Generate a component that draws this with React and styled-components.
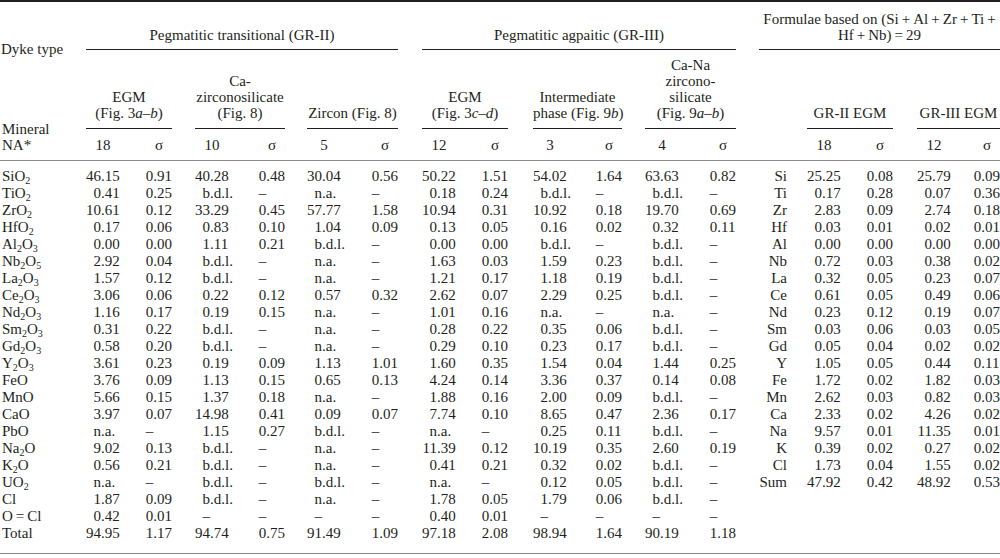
import React from 'react';
import styled, { createGlobalStyle } from 'styled-components';

// Column template shared by the head and every body row
const COLS =
    '86px 43px 43px 23px 45px 45px 22px 45px 46px 24px 43px 43px 25px 44px 45px 23px 45px 46px 23px 28px 20px 43px 43px 24px 41px 42px';

const INK = '#231f20';
const GREY = '#8a8a8a';

const GlobalStyle = createGlobalStyle`
    body {
        margin: 0;
        background: #ffffff;
        color: ${INK};
        font-family: "Liberation Serif", "Times New Roman", serif;
    }
`;

const Table = styled.div`
    width: 1000px;
    font-size: 15px;
    border-top: 2px solid ${INK};
    border-bottom: 1px solid ${GREY};
`;

const Head = styled.div`
    display: grid;
    grid-template-columns: ${COLS};
    grid-template-rows: 48px 79px 31px;
    border-bottom: 1px solid ${GREY};
`;

const DykeType = styled.div`
    grid-column: 1;
    grid-row: 1 / 3;
    align-self: start;
    padding: 39px 0 0 1px;
    line-height: 17px;
`;

const GroupTitle = styled.div`
    grid-column: ${p => p.$span};
    grid-row: 1;
    align-self: end;
    text-align: center;
    line-height: 16px;
    padding-bottom: 6px;
    border-bottom: 1px solid ${INK};
`;

const SubTitle = styled.div`
    grid-column: ${p => p.$span};
    grid-row: 2;
    align-self: end;
    text-align: center;
    line-height: 16px;
    padding-bottom: 7px;
    border-bottom: 1px solid ${INK};
    white-space: nowrap;
`;

const MineralLabel = styled.div`
    grid-column: 1;
    grid-row: 2 / 4;
    align-self: end;
    line-height: 16px;
    padding: 0 0 7px 2px;
`;

const Count = styled.div`
    grid-column: ${p => p.$col};
    grid-row: 3;
    align-self: end;
    justify-self: ${p => (p.$sigma ? 'end' : 'start')};
    width: ${p => (p.$sigma ? '26px' : '34px')};
    text-align: center;
    line-height: 16px;
    padding-bottom: 7px;
`;

const Body = styled.div`
    padding: 7px 0 11px;
`;

const Row = styled.div`
    display: grid;
    grid-template-columns: ${COLS};
    height: 17px;
    line-height: 17px;
`;

const Label = styled.div`
    grid-column: 1;
    padding-left: 2px;
    white-space: nowrap;
`;

const Elem = styled.div`
    grid-column: 20;
    text-align: right;
`;

const NumCell = styled.div`
    grid-column: ${p => p.$col};
    display: flex;
    justify-content: ${p => (p.$sigma ? 'flex-end' : 'flex-start')};
    white-space: nowrap;
`;

const Int = styled.span`
    display: inline-block;
    text-align: right;
    min-width: ${p => (p.$sigma ? '0' : '1em')};
`;

const Frac = styled.span`
    display: inline-block;
    text-align: left;
    width: ${p => (p.$sigma ? '1.25em' : 'auto')};
`;

const Sub = styled.sub`
    font-size: 10px;
    line-height: 0;
    vertical-align: -3px;
`;

const T = '\u2009';

const Num = ({ col, sigma, value }) => {
    const i = value.indexOf('.');
    const int = i === -1 ? value : value.slice(0, i);
    const frac = i === -1 ? '' : value.slice(i);
    return (
        <NumCell $col={col} $sigma={sigma}>
            <Int $sigma={sigma}>{int}</Int>
            <Frac $sigma={sigma}>{frac}</Frac>
        </NumCell>
    );
};

const f = (a, b) => (
    <>
        {a}
        <Sub>{b}</Sub>
    </>
);

const rows = [
    [<>Si{f('O', 2)}</>, '46.15 0.91 40.28 0.48 30.04 0.56 50.22 1.51 54.02 1.64 63.63 0.82', 'Si 25.25 0.08 25.79 0.09'],
    [<>Ti{f('O', 2)}</>, '0.41 0.25 b.d.l. – n.a. – 0.18 0.24 b.d.l. – b.d.l. –', 'Ti 0.17 0.28 0.07 0.36'],
    [<>Zr{f('O', 2)}</>, '10.61 0.12 33.29 0.45 57.77 1.58 10.94 0.31 10.92 0.18 19.70 0.69', 'Zr 2.83 0.09 2.74 0.18'],
    [<>Hf{f('O', 2)}</>, '0.17 0.06 0.83 0.10 1.04 0.09 0.13 0.05 0.16 0.02 0.32 0.11', 'Hf 0.03 0.01 0.02 0.01'],
    [<>{f('Al', 2)}{f('O', 3)}</>, '0.00 0.00 1.11 0.21 b.d.l. – 0.00 0.00 b.d.l. – b.d.l. –', 'Al 0.00 0.00 0.00 0.00'],
    [<>{f('Nb', 2)}{f('O', 5)}</>, '2.92 0.04 b.d.l. – n.a. – 1.63 0.03 1.59 0.23 b.d.l. –', 'Nb 0.72 0.03 0.38 0.02'],
    [<>{f('La', 2)}{f('O', 3)}</>, '1.57 0.12 b.d.l. – n.a. – 1.21 0.17 1.18 0.19 b.d.l. –', 'La 0.32 0.05 0.23 0.07'],
    [<>{f('Ce', 2)}{f('O', 3)}</>, '3.06 0.06 0.22 0.12 0.57 0.32 2.62 0.07 2.29 0.25 b.d.l. –', 'Ce 0.61 0.05 0.49 0.06'],
    [<>{f('Nd', 2)}{f('O', 3)}</>, '1.16 0.17 0.19 0.15 n.a. – 1.01 0.16 n.a. – n.a. –', 'Nd 0.23 0.12 0.19 0.07'],
    [<>{f('Sm', 2)}{f('O', 3)}</>, '0.31 0.22 b.d.l. – n.a. – 0.28 0.22 0.35 0.06 b.d.l. –', 'Sm 0.03 0.06 0.03 0.05'],
    [<>{f('Gd', 2)}{f('O', 3)}</>, '0.58 0.20 b.d.l. – n.a. – 0.29 0.10 0.23 0.17 b.d.l. –', 'Gd 0.05 0.04 0.02 0.02'],
    [<>{f('Y', 2)}{f('O', 3)}</>, '3.61 0.23 0.19 0.09 1.13 1.01 1.60 0.35 1.54 0.04 1.44 0.25', 'Y 1.05 0.05 0.44 0.11'],
    ['FeO', '3.76 0.09 1.13 0.15 0.65 0.13 4.24 0.14 3.36 0.37 0.14 0.08', 'Fe 1.72 0.02 1.82 0.03'],
    ['MnO', '5.66 0.15 1.37 0.18 n.a. – 1.88 0.16 2.00 0.09 b.d.l. –', 'Mn 2.62 0.03 0.82 0.03'],
    ['CaO', '3.97 0.07 14.98 0.41 0.09 0.07 7.74 0.10 8.65 0.47 2.36 0.17', 'Ca 2.33 0.02 4.26 0.02'],
    ['PbO', 'n.a. – 1.15 0.27 b.d.l. – n.a. – 0.25 0.11 b.d.l. –', 'Na 9.57 0.01 11.35 0.01'],
    [<>{f('Na', 2)}O</>, '9.02 0.13 b.d.l. – n.a. – 11.39 0.12 10.19 0.35 2.60 0.19', 'K 0.39 0.02 0.27 0.02'],
    [<>{f('K', 2)}O</>, '0.56 0.21 b.d.l. – n.a. – 0.41 0.21 0.32 0.02 b.d.l. –', 'Cl 1.73 0.04 1.55 0.02'],
    [<>U{f('O', 2)}</>, 'n.a. – b.d.l. – b.d.l. – n.a. – 0.12 0.05 b.d.l. –', 'Sum 47.92 0.42 48.92 0.53'],
    ['Cl', '1.87 0.09 b.d.l. – n.a. – 1.78 0.05 1.79 0.06 b.d.l. –', null],
    [`O${T}=${T}Cl`, '0.42 0.01 – – – – 0.40 0.01 – – – –', null],
    ['Total', '94.95 1.17 94.74 0.75 91.49 1.09 97.18 2.08 98.94 1.64 90.19 1.18', null],
];

// value / sigma column pairs
const OXIDE_COLS = [2, 3, 5, 6, 8, 9, 11, 12, 14, 15, 17, 18];
const FORMULA_COLS = [22, 23, 25, 26];

const subTitles = [
    ['2 / 4', <>EGM<br />(Fig. 3<i>a</i>–<i>b</i>)</>],
    ['5 / 7', <>Ca-<br />zirconosilicate<br />(Fig. 8)</>],
    ['8 / 10', <>Zircon (Fig. 8)</>],
    ['11 / 13', <>EGM<br />(Fig. 3<i>c</i>–<i>d</i>)</>],
    ['14 / 16', <>Intermediate<br />phase (Fig. 9<i>b</i>)</>],
    ['17 / 19', <>Ca-Na<br />zircono-<br />silicate<br />(Fig. 9<i>a</i>–<i>b</i>)</>],
    ['22 / 24', <>GR-II EGM</>],
    ['25 / 27', <>GR-III EGM</>],
];

const counts = ['18', '10', '5', '12', '3', '4', '18', '12'];
const countCols = [2, 5, 8, 11, 14, 17, 22, 25];

export default function App() {
    return (
        <>
            <GlobalStyle />
            <Table>
                <Head>
                    <DykeType>Dyke type</DykeType>
                    <GroupTitle $span="2 / 10">Pegmatitic transitional (GR-II)</GroupTitle>
                    <GroupTitle $span="11 / 19">Pegmatitic agpaitic (GR-III)</GroupTitle>
                    <GroupTitle $span="20 / 27">
                        Formulae based on (Si{T}+{T}Al{T}+{T}Zr{T}+{T}Ti{T}+
                        <br />
                        Hf{T}+{T}Nb){T}={T}29
                    </GroupTitle>

                    {subTitles.map(([span, text]) => (
                        <SubTitle key={span} $span={span}>{text}</SubTitle>
                    ))}

                    <MineralLabel>Mineral<br />NA*</MineralLabel>
                    {countCols.map((c, i) => (
                        <React.Fragment key={c}>
                            <Count $col={c}>{counts[i]}</Count>
                            <Count $col={c + 1} $sigma>σ</Count>
                        </React.Fragment>
                    ))}
                </Head>

                <Body>
                    {rows.map(([label, values, formula], r) => {
                        const v = values.split(' ');
                        const fm = formula ? formula.split(' ') : null;
                        return (
                            <Row key={r}>
                                <Label>{label}</Label>
                                {v.map((x, i) => (
                                    <Num key={i} col={OXIDE_COLS[i]} sigma={i % 2 === 1} value={x} />
                                ))}
                                {fm && <Elem>{fm[0]}</Elem>}
                                {fm &&
                                    fm.slice(1).map((x, i) => (
                                        <Num key={'f' + i} col={FORMULA_COLS[i]} sigma={i % 2 === 1} value={x} />
                                    ))}
                            </Row>
                        );
                    })}
                </Body>
            </Table>
        </>
    );
}
